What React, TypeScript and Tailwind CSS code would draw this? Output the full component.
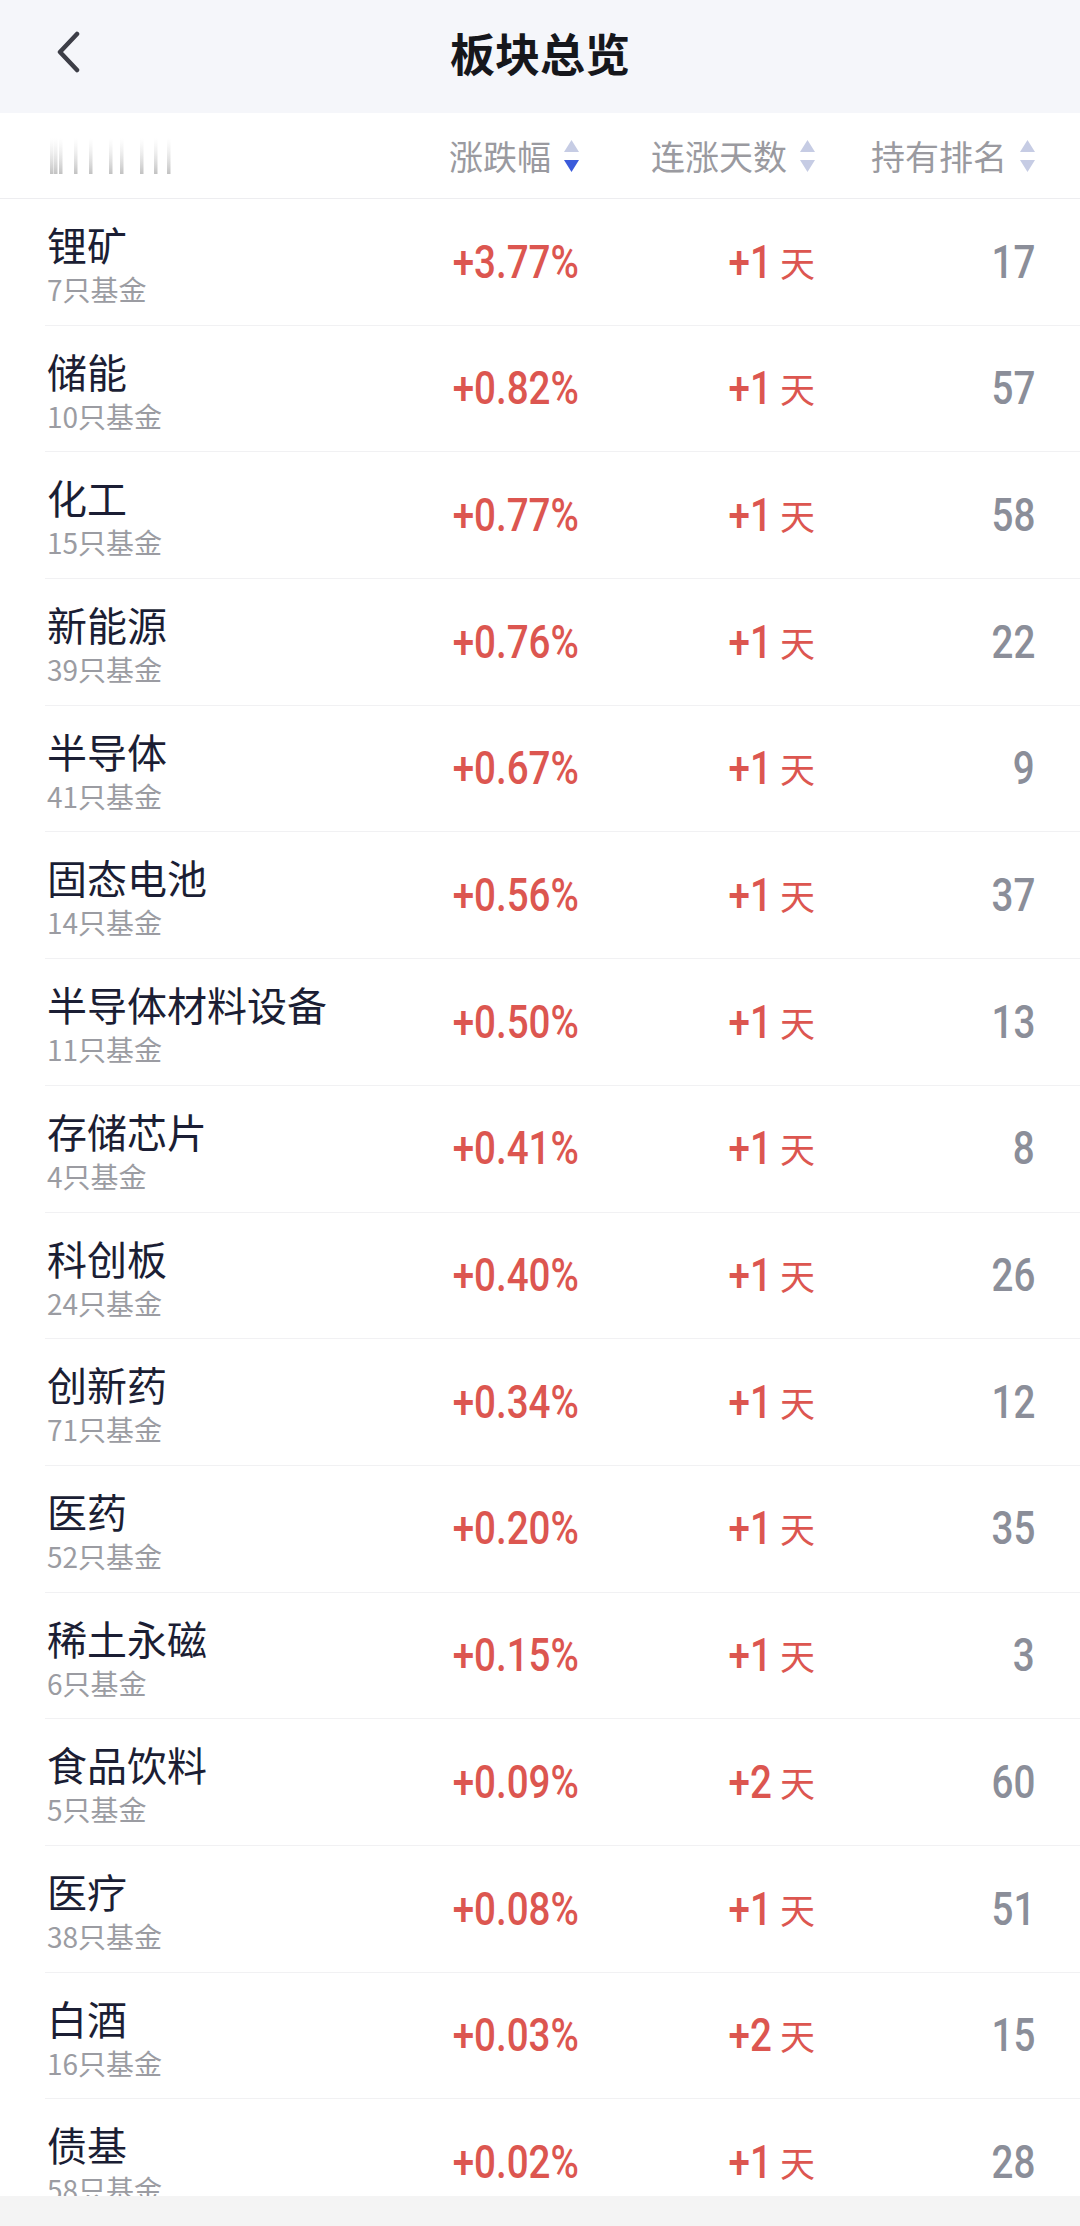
import React from 'react';

interface Sector {
    name: string;
    funds: number;
    change: string;
    days: number;
    rank: number;
}

const sectors: Sector[] = [
    { name: '锂矿', funds: 7, change: '+3.77%', days: 1, rank: 17 },
    { name: '储能', funds: 10, change: '+0.82%', days: 1, rank: 57 },
    { name: '化工', funds: 15, change: '+0.77%', days: 1, rank: 58 },
    { name: '新能源', funds: 39, change: '+0.76%', days: 1, rank: 22 },
    { name: '半导体', funds: 41, change: '+0.67%', days: 1, rank: 9 },
    { name: '固态电池', funds: 14, change: '+0.56%', days: 1, rank: 37 },
    { name: '半导体材料设备', funds: 11, change: '+0.50%', days: 1, rank: 13 },
    { name: '存储芯片', funds: 4, change: '+0.41%', days: 1, rank: 8 },
    { name: '科创板', funds: 24, change: '+0.40%', days: 1, rank: 26 },
    { name: '创新药', funds: 71, change: '+0.34%', days: 1, rank: 12 },
    { name: '医药', funds: 52, change: '+0.20%', days: 1, rank: 35 },
    { name: '稀土永磁', funds: 6, change: '+0.15%', days: 1, rank: 3 },
    { name: '食品饮料', funds: 5, change: '+0.09%', days: 2, rank: 60 },
    { name: '医疗', funds: 38, change: '+0.08%', days: 1, rank: 51 },
    { name: '白酒', funds: 16, change: '+0.03%', days: 2, rank: 15 },
    { name: '债基', funds: 58, change: '+0.02%', days: 1, rank: 28 },
];

const cjk = "font-['Noto_Sans_CJK_SC','Noto_Sans',sans-serif]";
const num = "font-['Roboto','Noto_Sans_CJK_SC',sans-serif]";

const SortArrows: React.FC<{ active?: 'down' | 'up' }> = ({ active }) => (
    <svg width="15" height="32" viewBox="0 0 15 32" className="ml-[13px] shrink-0">
        <polygon points="7.5,0 15,12 0,12" fill={active === 'up' ? '#3b5bdb' : '#c6cce4'} />
        <polygon points="0,20 15,20 7.5,32" fill={active === 'down' ? '#3b5bdb' : '#c6cce4'} />
    </svg>
);

// blurred label in the header, drawn as faded strokes
const BlurredLabel: React.FC = () => {
    const xs = [3, 7, 12, 27, 42, 62, 73, 93, 107, 120];
    return (
        <svg width="130" height="40" viewBox="0 0 130 40">
            <defs>
                <linearGradient id="fade" x1="0" y1="0" x2="0" y2="1">
                    <stop offset="0" stopColor="#d6d6d6" stopOpacity="0" />
                    <stop offset="1" stopColor="#a8a8a8" stopOpacity="0.7" />
                </linearGradient>
            </defs>
            {xs.map((x) => (
                <rect key={x} x={x} y="2" width="3.5" height="36" fill="url(#fade)" />
            ))}
        </svg>
    );
};

const Row: React.FC<{ s: Sector }> = ({ s }) => (
    <div className="ml-[45px] pl-[2px] pr-[45px] h-[126.7px] shrink-0 flex items-center border-b border-[#f1f1f3]">
        <div className="flex-1 self-start pt-[23px]">
            <div className={`${cjk} text-[40px] leading-[44px] text-[#1b1e34]`}>{s.name}</div>
            <div className={`${cjk} text-[28px] leading-[34px] mt-[6px] text-[#9b9ca2]`}>{s.funds}只基金</div>
        </div>
        <div className="w-[200px] flex justify-end">
            <span className={`${num} inline-block origin-right scale-x-[0.82] text-[47px] font-medium text-[#dc5650]`}>{s.change}</span>
        </div>
        <div className="w-[236px] flex justify-end items-center">
            <span className={`${num} inline-block origin-right scale-x-[0.82] text-[47px] font-medium text-[#dc5650]`}>+{s.days}</span>
            <span className={`${cjk} text-[35px] ml-[8px] text-[#dc5650]`}>天</span>
        </div>
        <div className="w-[220px] flex justify-end">
            <span className={`${num} inline-block origin-right scale-x-[0.82] text-[47px] font-medium text-[#8b8e99]`}>{s.rank}</span>
        </div>
    </div>
);

export default function App() {
    return (
        <div className="w-[1080px] h-[2226px] flex flex-col bg-white overflow-hidden">
            <div className="h-[113px] shrink-0 bg-[#f5f6fa] flex items-center relative">
                <svg width="28" height="42" viewBox="0 0 28 42" className="absolute left-[55px] top-[31px]">
                    <polyline points="22,3 5,21 22,39" fill="none" stroke="#3d3e47" strokeWidth="4.5" strokeLinecap="round" strokeLinejoin="round" />
                </svg>
                <h1 className={`${cjk} w-full text-center text-[45px] font-bold text-[#16171c] -mt-[8px]`}>板块总览</h1>
            </div>

            <div className="h-[86px] shrink-0 flex items-center pl-[47px] pr-[45px] border-b border-[#ededf0]">
                <div className="flex-1">
                    <BlurredLabel />
                </div>
                <div className={`w-[200px] flex justify-end items-center ${cjk} text-[34px] text-[#9a9aa0]`}>
                    涨跌幅<SortArrows active="down" />
                </div>
                <div className={`w-[236px] flex justify-end items-center ${cjk} text-[34px] text-[#9a9aa0]`}>
                    连涨天数<SortArrows />
                </div>
                <div className={`w-[220px] flex justify-end items-center ${cjk} text-[34px] text-[#9a9aa0]`}>
                    持有排名<SortArrows />
                </div>
            </div>

            <div className="flex-1 flex flex-col overflow-hidden">
                {sectors.map((s) => (
                    <Row key={s.name} s={s} />
                ))}
            </div>

            <div className="h-[30px] shrink-0 bg-[#f4f4f4]" />
        </div>
    );
}
